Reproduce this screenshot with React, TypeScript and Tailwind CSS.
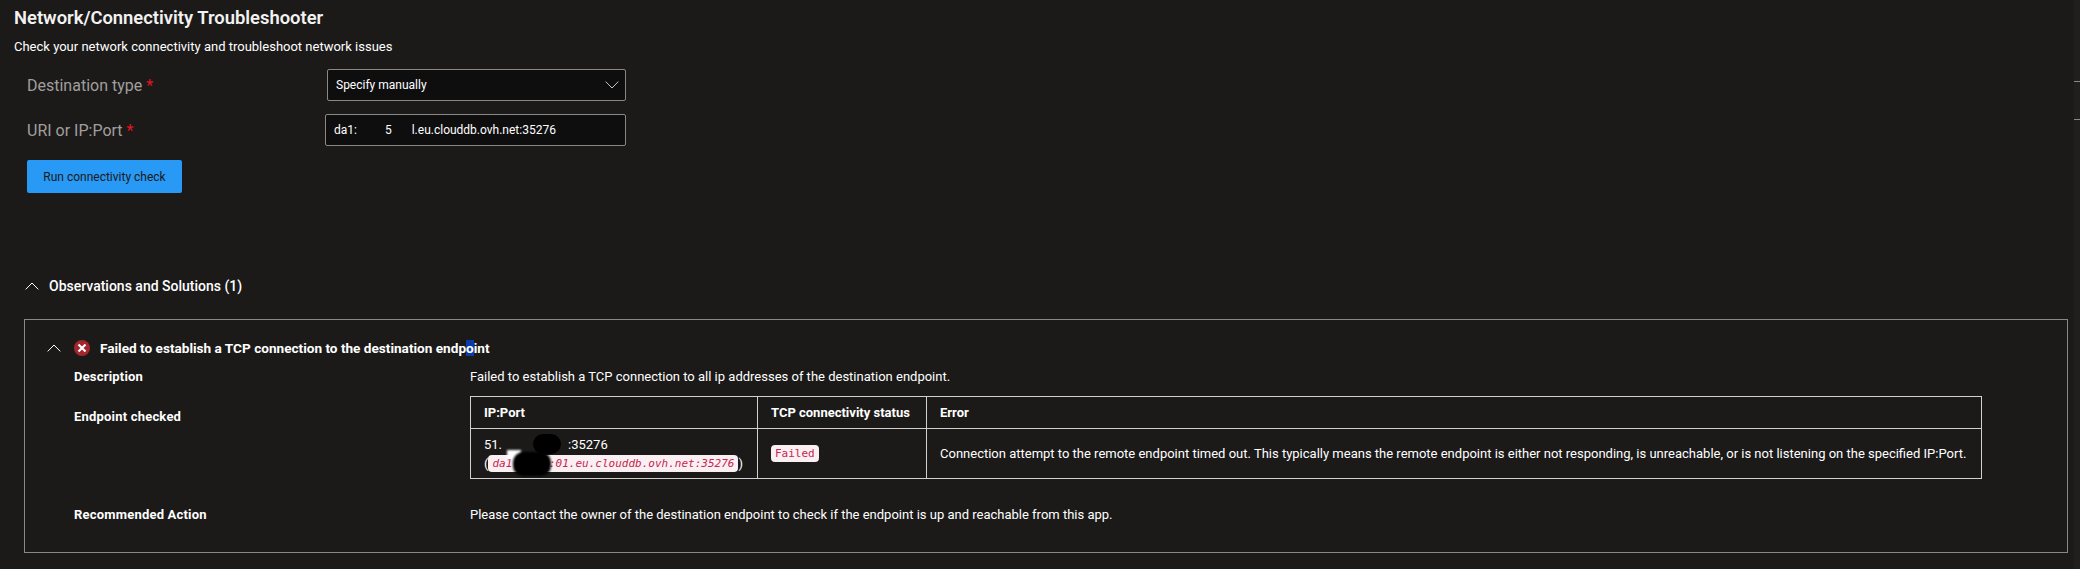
const sans = "font-['Roboto',sans-serif]";

function Chevron({ up = true, className = '' }: { up?: boolean; className?: string }) {
  return (
    <svg width="14" height="8" viewBox="0 0 14 8" fill="none" stroke="currentColor" strokeWidth="1" className={className}>
      <path d={up ? 'M0.7 7.4 L7 1 L13.3 7.4' : 'M0.7 0.6 L7 7 L13.3 0.6'} />
    </svg>
  );
}

function FieldLabel({ text }: { text: string }) {
  return (
    <span className="relative top-[1px] text-[16px] text-[#a19f9d]">
      {text} <span className="text-[#e81123]">*</span>
    </span>
  );
}

function DetailRow({ label, className, children }: { label: string; className: string; children: React.ReactNode }) {
  return (
    <div className={`flex ${className}`}>
      <div className="w-[396px] shrink-0 text-[13px] font-bold leading-[20px] tracking-[0.2px] text-white">{label}</div>
      <div className="min-w-0 flex-1 text-[13px] leading-[20px] text-white">{children}</div>
    </div>
  );
}

export default function App() {
  return (
    <div className={`relative h-[569px] overflow-hidden bg-[#1b1a19] pl-[14px] text-white ${sans}`}>
      <div className="absolute right-0 top-0 h-full w-[6px] bg-[#201f1e]">
        <div className="mt-[81px] h-px w-full bg-[#8a8886]" />
        <div className="mt-[37px] h-px w-full bg-[#8a8886]" />
      </div>

      <h1 className="pt-[6px] text-[18.4px] font-semibold leading-[24px] text-[#f3f2f1]">Network/Connectivity Troubleshooter</h1>
      <p className="mt-[7px] text-[13px] leading-[20px] text-white">Check your network connectivity and troubleshoot network issues</p>

      <div className="ml-[13px] mt-[12px] flex items-center">
        <div className="w-[300px]"><FieldLabel text="Destination type" /></div>
        <div className="flex h-[32px] w-[299px] items-center justify-between rounded-[2px] border border-[#8a8886] bg-[#0e0e0f] pl-[8px] pr-[6px] text-[12px]">
          Specify manually
          <Chevron up={false} className="text-[#c8c6c4]" />
        </div>
      </div>
      <div className="ml-[13px] mt-[13px] flex items-center">
        <div className="w-[298px]"><FieldLabel text="URI or IP:Port" /></div>
        <div className="flex h-[32px] w-[301px] items-center rounded-[2px] border border-[#8a8886] bg-[#0e0e0f] pl-[8px] text-[12px]">
          da1:<span className="w-[28px]" />5<span className="w-[20px]" />l.eu.clouddb.ovh.net:35276
        </div>
      </div>
      <button className="ml-[13px] mt-[14px] block h-[33px] w-[155px] rounded-[2px] bg-[#2899f5] text-[12px] text-[#1b1a19]">
        Run connectivity check
      </button>

      <div className="ml-[11px] mt-[83px] flex h-[20px] items-center">
        <Chevron />
        <span className="ml-[10px] text-[14px] font-medium">Observations and Solutions (1)</span>
      </div>

      <div className="mr-[12px] ml-[10px] mt-[23px] h-[234px] border border-[#8a8886] pt-[18px]">
        <div className="flex h-[20px] items-center pl-[22px]">
          <Chevron />
          <span className="ml-[13px] flex h-[16px] w-[16px] items-center justify-center rounded-full bg-[#a4262c]">
            <svg width="10" height="10" viewBox="0 0 10 10" stroke="white" strokeWidth="2.2">
              <path d="M1.5 1.5 L8.5 8.5 M8.5 1.5 L1.5 8.5" />
            </svg>
          </span>
          <span className="ml-[10px] text-[13.6px] font-bold leading-[20px]">
            Failed to establish a TCP connection to the destination endp<span className="bg-[#0a3ca8]">o</span>int
          </span>
        </div>

        <div className="pl-[49px]">
          <DetailRow label="Description" className="mt-[9px]">
            Failed to establish a TCP connection to all ip addresses of the destination endpoint.
          </DetailRow>
          <div className="mt-[9px] flex">
            <div className="w-[396px] shrink-0 pt-[11px] text-[13px] font-bold leading-[20px] tracking-[0.2px] text-white">Endpoint checked</div>
            <table className="w-[1512px] table-fixed border-collapse border border-[#d2d0ce] text-[13px] leading-[20px]">
              <colgroup>
                <col className="w-[287px]" />
                <col className="w-[169px]" />
                <col />
              </colgroup>
              <thead>
                <tr className="h-[32px] text-left">
                  <th className="border border-[#d2d0ce] pl-[13px] font-bold">IP:Port</th>
                  <th className="border border-[#d2d0ce] pl-[13px] font-bold">TCP connectivity status</th>
                  <th className="border border-[#d2d0ce] pl-[13px] font-bold">Error</th>
                </tr>
              </thead>
              <tbody>
                <tr className="h-[50px]">
                  <td className="relative border border-[#d2d0ce] pl-[13px] leading-[19px]">
                    <div>51.<span className="inline-block w-[66px]" />:35276</div>
                    <div className="flex items-center">
                      (<code className="rounded-[4px] bg-[#faf0f4] px-[4px] font-['DejaVu_Sans_Mono',monospace] text-[11px] italic leading-[17px] text-[#c7254e]">da1<span className="inline-block w-[30px]" />0:01.eu.clouddb.ovh.net:35276</code>)
                    </div>
                    <span className="absolute left-[62px] top-[5px] h-[20px] w-[28px] rounded-full bg-black" />
                    <span className="absolute left-[36px] top-[21px] h-[9px] w-[14px] bg-white blur-[1px]" />
                    <span className="absolute left-[42px] top-[23px] h-[24px] w-[38px] rounded-[10px] bg-black blur-[1px]" />
                  </td>
                  <td className="border border-[#d2d0ce] pl-[13px]">
                    <code className="rounded-[4px] bg-[#faf0f4] px-[4px] py-[2px] font-['DejaVu_Sans_Mono',monospace] text-[11px] text-[#c7254e]">Failed</code>
                  </td>
                  <td className="whitespace-nowrap border border-[#d2d0ce] pl-[13px]">
                    Connection attempt to the remote endpoint timed out. This typically means the remote endpoint is either not responding, is unreachable, or is not listening on the specified IP:Port.
                  </td>
                </tr>
              </tbody>
            </table>
          </div>
          <DetailRow label="Recommended Action" className="mt-[26px]">
            Please contact the owner of the destination endpoint to check if the endpoint is up and reachable from this app.
          </DetailRow>
        </div>
      </div>
    </div>
  );
}
